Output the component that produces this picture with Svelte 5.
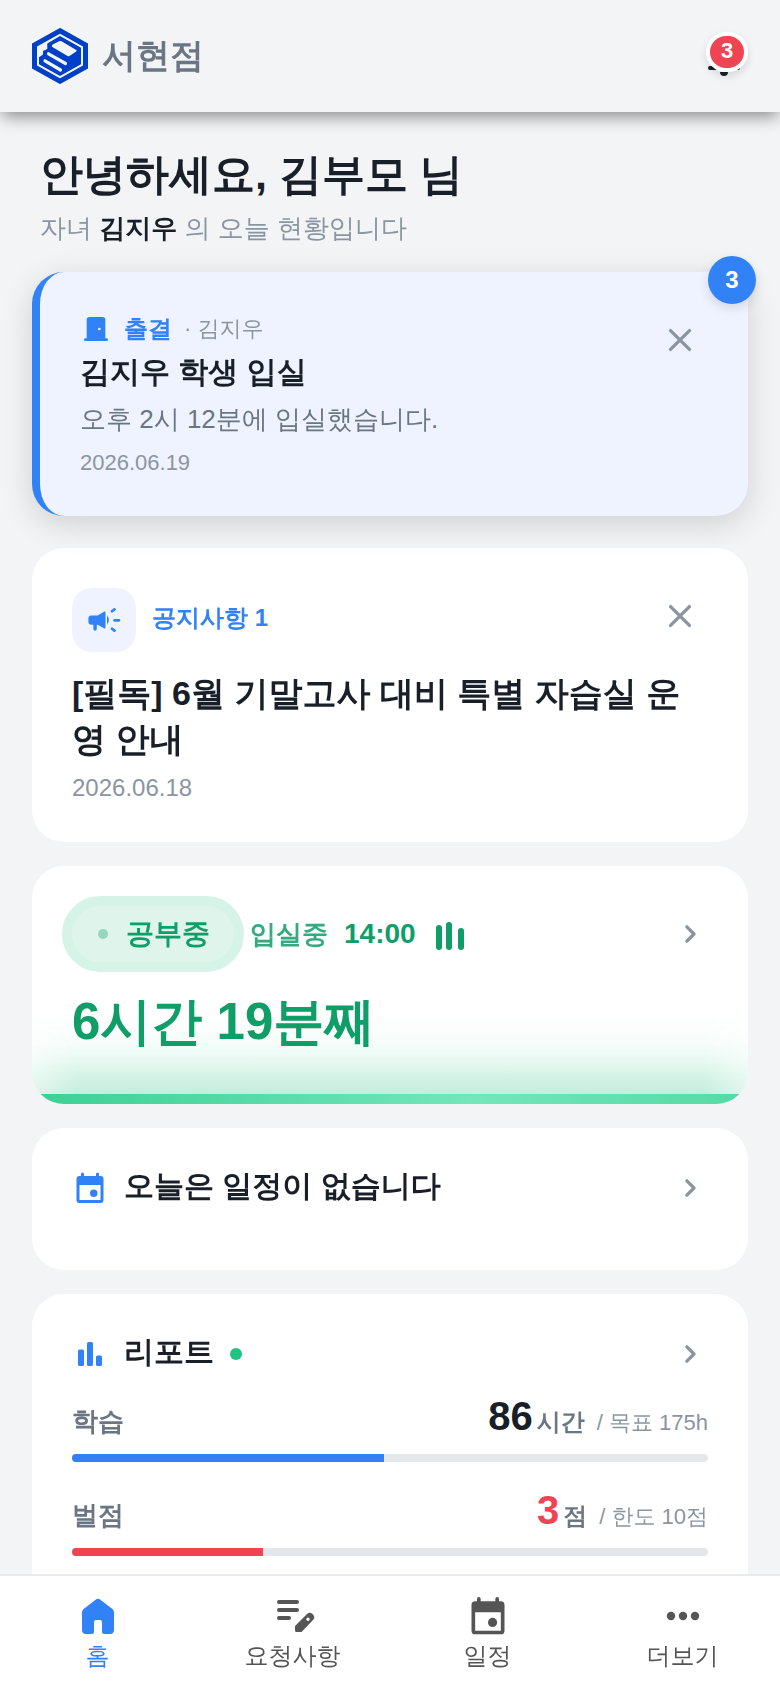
<script>
	const tabs = [
		{ label: '홈', icon: 'home', active: true },
		{ label: '요청사항', icon: 'edit' },
		{ label: '일정', icon: 'calendar' },
		{ label: '더보기', icon: 'more' }
	]

	const meters = [
		{ label: '학습', value: 86, unit: '시간', limit: '/ 목표 175h', percent: 49, tone: 'blue' },
		{ label: '벌점', value: 3, unit: '점', limit: '/ 한도 10점', percent: 30, tone: 'red' }
	]

	let showAlert = $state(true)
	let showNotice = $state(true)
</script>

{#snippet closeIcon()}
	<svg width="36" height="36" viewBox="0 0 24 24" aria-hidden="true">
		<path d="M5.700 5.700l12.600 12.600M18.300 5.700L5.700 18.300" stroke="currentColor" stroke-width="2.200" stroke-linecap="round" fill="none" />
	</svg>
{/snippet}

{#snippet chevron()}
	<svg width="36" height="36" viewBox="0 0 24 24" aria-hidden="true">
		<path d="M9.900 7.200l4.800 4.800-4.800 4.800" stroke="currentColor" stroke-width="2.200" stroke-linecap="round" stroke-linejoin="round" fill="none" />
	</svg>
{/snippet}

{#snippet calendar(size)}
	<svg width={size} height={size} viewBox="0 0 24 24" fill="currentColor" aria-hidden="true">
		<path fill-rule="evenodd" d="M7 1.600a1 1 0 0 1 1 1V4h8V2.600a1 1 0 0 1 2 0V4h1a2 2 0 0 1 2 2v14a2 2 0 0 1-2 2H5a2 2 0 0 1-2-2V6a2 2 0 0 1 2-2h1V2.600a1 1 0 0 1 1-1zM5 10v10h14V10z" />
		<circle cx="14.500" cy="15.500" r="2.500" />
	</svg>
{/snippet}

<div class="app">
	<header>
		<div class="brand">
			<svg width="56" height="56" viewBox="0 0 56 56" aria-hidden="true">
				<path d="M28 2.800L53.500 17v22L28 53.200 2.500 39V17z" fill="none" stroke="#003fc7" stroke-width="5" />
				<path d="M28 8l21 11.800V36.200L28 48 7 36.200V29.300l4-2.800v-3.500l4.300-2V15.500z" fill="#003fc7" />
				<path d="M27 13.300q1.300-.7 2.600 0L44.200 22q1 .8 0 1.600L37.500 28q-1 .6-2 0L20.300 19q-1-.9 0-2.200z" fill="#f2f4f6" />
				<path d="M16.500 25.800L33.500 35.500M13 32.800L28.500 42" stroke="#f2f4f6" stroke-width="3.200" stroke-linecap="round" />
			</svg>
			<span>서현점</span>
		</div>
		<button class="bell" aria-label="알림">
			<svg width="40" height="40" viewBox="0 0 24 24" fill="currentColor" aria-hidden="true">
				<path d="M3.600 20.400a1.200 1.200 0 0 1 0-2.400H5v-8a7 7 0 0 1 5.200-6.700 1.800 1.800 0 0 1 3.600 0A7 7 0 0 1 19 10v8h1.400a1.200 1.200 0 0 1 0 2.400zM12 24a2.400 2.400 0 0 1-2.400-2.400h4.800A2.400 2.400 0 0 1 12 24z" />
			</svg>
			<span class="count">3</span>
		</button>
	</header>

	<main>
		<div class="greeting">
			<h1>안녕하세요, 김부모 님</h1>
			<p>자녀 <b>김지우</b> 의 오늘 현황입니다</p>
		</div>

		{#if showAlert}
			<section class="alert">
				<span class="stack">3</span>
				<div class="alert-body">
					<div class="kind">
						<svg width="32" height="32" viewBox="0 0 24 24" fill="currentColor" aria-hidden="true">
							<path fill-rule="evenodd" d="M4 21a1 1 0 0 1 0-2h1V5a2 2 0 0 1 2-2h10a2 2 0 0 1 2 2v14h1a1 1 0 0 1 0 2zM14.500 11a1 1 0 1 0 0 2 1 1 0 0 0 0-2z" />
						</svg>
						<strong>출결</strong>
						<span>· 김지우</span>
					</div>
					<h2>김지우 학생 입실</h2>
					<p>오후 2시 12분에 입실했습니다.</p>
					<time>2026.06.19</time>
				</div>
				<button class="close" aria-label="닫기" onclick={() => (showAlert = false)}>{@render closeIcon()}</button>
			</section>
		{/if}

		{#if showNotice}
			<section class="card notice">
				<div class="row">
					<span class="tile">
						<svg width="36" height="36" viewBox="0 0 24 24" fill="currentColor" aria-hidden="true">
							<path d="M3.600 9h4.200l4.500-2.600a.5.5 0 0 1 .7.400v10.400a.5.500 0 0 1-.7.400L7.800 15.200H7.200V18a1.100 1.100 0 0 1-2.300 0v-2.800H3.600a2 2 0 0 1-2-2V11a2 2 0 0 1 2-2zM14 9q2.600 3 0 6z" />
							<path d="M17.300 6.200l1.700-1.300M19 12.200h3M17.300 17.800l1.700 1.300" stroke="currentColor" stroke-width="1.800" stroke-linecap="round" />
						</svg>
					</span>
					<strong>공지사항 1</strong>
					<button class="close" aria-label="닫기" onclick={() => (showNotice = false)}>{@render closeIcon()}</button>
				</div>
				<h2>[필독] 6월 기말고사 대비 특별 자습실 운영 안내</h2>
				<time>2026.06.18</time>
			</section>
		{/if}

		<section class="card study">
			<div class="row">
				<span class="pill"><i></i>공부중</span>
				<span class="state">입실중</span>
				<b>14:00</b>
				<svg class="bars" width="28" height="28" viewBox="0 0 28 28" fill="currentColor" aria-hidden="true">
					<rect x="0" y="3" width="6" height="25" rx="3" />
					<rect x="10" y="0" width="6" height="28" rx="3" />
					<rect x="22" y="6" width="6" height="22" rx="3" />
				</svg>
				<a class="more" href="#study" aria-label="학습 현황">{@render chevron()}</a>
			</div>
			<p class="elapsed">6시간 19분째</p>
		</section>

		<section class="card plan">
			<div class="row">
				{@render calendar(36)}
				<h2>오늘은 일정이 없습니다</h2>
				<a class="more" href="#plan" aria-label="일정 보기">{@render chevron()}</a>
			</div>
		</section>

		<section class="card report">
			<div class="row">
				<svg width="36" height="36" viewBox="0 0 24 24" fill="currentColor" aria-hidden="true">
					<rect x="4" y="9" width="4" height="11" rx="1" />
					<rect x="10" y="4" width="4" height="16" rx="1" />
					<rect x="16" y="13" width="4" height="7" rx="1" />
				</svg>
				<h2>리포트</h2>
				<i class="fresh"></i>
				<a class="more" href="#report" aria-label="리포트 보기">{@render chevron()}</a>
			</div>
			{#each meters as m}
				<div class="meter {m.tone}">
					<div class="figures">
						<span class="name">{m.label}</span>
						<b>{m.value}</b>
						<span class="unit">{m.unit}</span>
						<small>{m.limit}</small>
					</div>
					<div class="track"><div class="fill" style="width: {m.percent}%"></div></div>
				</div>
			{/each}
		</section>
	</main>

	<nav>
		{#each tabs as tab}
			<a href="#{tab.icon}" class:active={tab.active}>
				{#if tab.icon === 'calendar'}
					{@render calendar(44)}
				{:else}
					<svg width="44" height="44" viewBox="0 0 44 44" fill="currentColor" aria-hidden="true">
						{#if tab.icon === 'home'}
							<path d="M19.600 5.700a4 4 0 0 1 4.800 0l12 9.300a4 4 0 0 1 1.600 3.200V36a4 4 0 0 1-4 4h-6a2 2 0 0 1-2-2V28a2 2 0 0 0-2-2h-4a2 2 0 0 0-2 2v10a2 2 0 0 1-2 2h-6a4 4 0 0 1-4-4V18.200a4 4 0 0 1 1.600-3.200z" />
						{:else if tab.icon === 'edit'}
							<path d="M8 8h18M8 16h18M8 24h10" stroke="currentColor" stroke-width="4" stroke-linecap="round" />
							<path fill-rule="evenodd" d="M24 32l12-12a4 4 0 0 1 5.500 0l.5.500a4 4 0 0 1 0 5.500l-11.500 12h-5a1.500 1.500 0 0 1-1.500-1.500zM37 23.500a1.700 1.700 0 1 0 0 3.400 1.700 1.700 0 0 0 0-3.400z" />
						{:else}
							<circle cx="10" cy="22" r="4.200" />
							<circle cx="22" cy="22" r="4.200" />
							<circle cx="34" cy="22" r="4.200" />
						{/if}
					</svg>
				{/if}
				<span>{tab.label}</span>
			</a>
		{/each}
	</nav>
</div>

<style>
	:global(body) {
		background: #f2f4f6;
		color: #191f28;
		font-family: "Liberation Sans", "WenQuanYi Zen Hei", "Noto Sans CJK KR", sans-serif;
	}

	h1, h2, p {
		margin: 0;
	}

	h1, h2, b, strong {
		font-weight: 900;
	}

	button {
		border: 0;
		padding: 0;
		background: none;
		color: inherit;
		font: inherit;
		cursor: pointer;
	}

	a {
		color: inherit;
		text-decoration: none;
	}

	svg {
		display: block;
		flex: none;
	}

	header {
		position: sticky;
		top: 0;
		z-index: 2;
		display: flex;
		align-items: center;
		justify-content: space-between;
		height: 112px;
		padding: 0 32px;
		background: #f2f4f6;
		box-shadow: 0 6px 16px -2px rgba(0, 0, 0, 0.45);
	}
	.brand {
		display: flex;
		align-items: center;
		gap: 14px;
		font-size: 34px;
		font-weight: 900;
		color: #6b7684;
	}
	.bell {
		position: relative;
		margin-right: 4px;
	}
	.count {
		position: absolute;
		top: -4px;
		left: 2px;
		box-sizing: border-box;
		width: 42px;
		height: 40px;
		border: 4px solid #fff;
		border-radius: 20px;
		background: #f04452;
		color: #fff;
		font-size: 22px;
		font-weight: bold;
		line-height: 30px;
		text-align: center;
		box-shadow: 0 4px 8px rgba(0, 0, 0, 0.12);
	}

	main {
		display: flex;
		flex-direction: column;
		gap: 24px;
		padding: 32px 32px 140px;
	}

	.greeting {
		padding: 0 8px;
	}
	h1 {
		font-size: 43px;
		line-height: 60px;
	}
	.greeting p {
		margin: 6px 0 2px;
		font-size: 26px;
		line-height: 36px;
		color: #8b95a1;
	}
	.greeting b {
		color: #191f28;
	}

	.alert {
		position: relative;
		display: flex;
		justify-content: space-between;
		align-items: flex-start;
		margin-bottom: 8px;
		padding: 40px;
		border-left: 8px solid #3182f6;
		border-radius: 32px;
		background: #eef3ff;
		box-shadow: 0 8px 32px rgba(0, 0, 0, 0.15);
	}
	.stack {
		position: absolute;
		top: -16px;
		right: -8px;
		width: 48px;
		height: 48px;
		border-radius: 50%;
		background: #3182f6;
		color: #fff;
		font-size: 24px;
		font-weight: bold;
		line-height: 48px;
		text-align: center;
		box-shadow: 0 4px 12px rgba(0, 0, 0, 0.12);
	}
	.kind {
		display: flex;
		align-items: center;
		gap: 12px;
		line-height: 34px;
		color: #3182f6;
	}
	.kind strong {
		font-size: 24px;
	}
	.kind span {
		font-size: 22px;
		color: #8b95a1;
	}
	h2 {
		font-size: 30px;
		line-height: 40px;
	}
	.alert h2 {
		margin-top: 6px;
	}
	.alert p {
		margin-top: 8px;
		font-size: 26px;
		line-height: 38px;
		color: #6b7684;
	}
	time {
		display: block;
		font-size: 24px;
		line-height: 28px;
		color: #8b95a1;
	}
	.alert time {
		margin-top: 12px;
		font-size: 22px;
		line-height: 26px;
	}
	.close {
		padding: 10px;
		color: #8b95a1;
	}

	.card {
		padding: 40px;
		border-radius: 32px;
		background: #fff;
	}
	.row {
		display: flex;
		align-items: center;
	}
	.notice strong {
		flex: 1;
		padding-bottom: 4px;
		font-size: 24px;
		color: #3182f6;
	}
	.notice .close {
		align-self: flex-start;
	}
	.tile {
		margin-right: 16px;
		padding: 14px;
		border-radius: 20px;
		background: #eef3ff;
		color: #3182f6;
	}
	.notice h2 {
		margin: 18px 0 12px;
		font-size: 34px;
		line-height: 46px;
		word-break: break-all;
	}

	.more {
		margin-left: auto;
		color: #8b95a1;
	}

	.study {
		position: relative;
		isolation: isolate;
		overflow: hidden;
		padding-top: 30px;
		padding-bottom: 48px;
		color: #0f9d68;
	}
	.study::before {
		content: '';
		position: absolute;
		z-index: -1;
		left: 0;
		right: 0;
		bottom: 0;
		height: 92px;
		background: linear-gradient(to top,
			rgba(26, 180, 120, 0.25) 10px,
			rgba(32, 195, 132, 0.2) 27px,
			rgba(32, 195, 132, 0.1) 44px,
			rgba(32, 195, 132, 0.04) 62px,
			rgba(32, 195, 132, 0) 92px);
		mask-image: linear-gradient(90deg, rgba(0, 0, 0, 0.5), #000 44px, #000 calc(100% - 44px), rgba(0, 0, 0, 0.5));
	}
	.study::after {
		content: '';
		position: absolute;
		left: 0;
		right: 0;
		bottom: 0;
		height: 10px;
		background: linear-gradient(90deg, #3dcf96, #74e6ba 62%, #55d9a5);
	}
	.pill {
		display: flex;
		align-items: center;
		gap: 18px;
		margin-left: -10px;
		padding: 10px 24px 10px 26px;
		border: 10px solid #d6f3e7;
		border-radius: 38px;
		background: #dff5ec;
		font-size: 28px;
		font-weight: 900;
		line-height: 36px;
	}
	.pill i {
		width: 10px;
		height: 10px;
		border-radius: 50%;
		background: #93d7be;
	}
	.state {
		margin: 0 16px 0 6px;
		font-size: 26px;
		font-weight: 900;
		opacity: 0.85;
	}
	.study b {
		font-size: 28px;
	}
	.bars {
		margin: 4px 0 0 20px;
	}
	.elapsed {
		margin-top: 16px;
		font-size: 51px;
		font-weight: 900;
		line-height: 68px;
	}

	.plan .row, .report .row {
		gap: 16px;
		color: #3182f6;
	}
	.row h2 {
		padding-bottom: 4px;
		line-height: 36px;
		color: #191f28;
	}
	.row .more {
		color: #8b95a1;
	}
	.plan {
		padding-bottom: 62px;
	}
	.report .row {
		margin-bottom: 18px;
	}

	.fresh {
		width: 12px;
		height: 12px;
		border-radius: 50%;
		background: #20c384;
	}
	.figures {
		display: flex;
		align-items: baseline;
		color: #6b7684;
		font-size: 26px;
		font-weight: 900;
	}
	.name {
		flex: 1;
	}
	.unit {
		font-size: 24px;
	}
	.figures b {
		margin-right: 4px;
		font-size: 40px;
		line-height: 48px;
		color: #191f28;
	}
	.figures small {
		margin-left: 12px;
		font-size: 22px;
		font-weight: normal;
		color: #8b95a1;
	}
	.red b {
		color: #f04452;
	}
	.meter {
		margin-bottom: 24px;
	}
	.track {
		height: 8px;
		margin-top: 14px;
		border-radius: 4px;
		background: #e5e8eb;
		overflow: hidden;
	}
	.fill {
		height: 100%;
		background: #3182f6;
	}
	.red .fill {
		background: #f04452;
	}

	nav {
		position: fixed;
		left: 0;
		right: 0;
		bottom: 0;
		z-index: 2;
		display: grid;
		grid-template-columns: repeat(4, 1fr);
		padding: 18px 0 14px;
		border-top: 2px solid #e9eaec;
		background: #fff;
		color: #555;
	}
	nav a {
		display: flex;
		flex-direction: column;
		align-items: center;
		font-size: 24px;
		line-height: 36px;
	}
	nav .active {
		color: #3182f6;
	}
</style>
